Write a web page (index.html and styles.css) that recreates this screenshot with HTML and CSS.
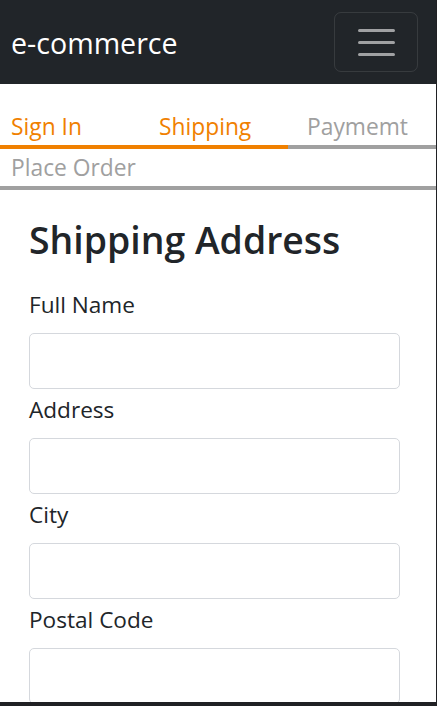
FILE: index.html
```html
<!DOCTYPE html>
<html lang="en">
<head>
<meta charset="utf-8">
<title>Shipping Address</title>
<link rel="stylesheet" href="styles.css">
</head>
<body>
<div class="page">
  <header class="navbar">
    <a class="brand" href="#">e-commerce</a>
    <button class="toggler" type="button" aria-label="Toggle navigation">
      <svg width="37" height="27" viewBox="0 0 37 27">
        <path d="M1.5 1.5h34M1.5 13.5h34M1.5 25.5h34" stroke="#a0a1a3" stroke-width="3" stroke-linecap="round" fill="none"/>
      </svg>
    </button>
  </header>
  <nav class="steps">
    <div class="step active">Sign In</div>
    <div class="step active">Shipping</div>
    <div class="step">Paymemt</div>
    <div class="step step-wide">Place Order</div>
  </nav>
  <main class="container">
    <h1 class="title">Shipping Address</h1>
    <form class="form">
      <div class="field">
        <label class="label" for="fullName">Full Name</label>
        <input class="input" id="fullName" type="text">
      </div>
      <div class="field">
        <label class="label" for="address">Address</label>
        <input class="input" id="address" type="text">
      </div>
      <div class="field">
        <label class="label" for="city">City</label>
        <input class="input" id="city" type="text">
      </div>
      <div class="field">
        <label class="label" for="postal">Postal Code</label>
        <input class="input" id="postal" type="text">
      </div>
    </form>
  </main>
</div>
</body>
</html>
```
FILE: styles.css
```css
html {
  margin: 0;
  background: #202124;
  height: 100%;
  overflow: hidden;
}
body {
  margin: 0;
  font-family: "Open Sans", "Noto Sans", "Liberation Sans", sans-serif;
  color: #212529;
}
.page {
  width: 436px;
  height: 702px;
  background: #fff;
  overflow: hidden;
}
.navbar {
  width: 437px;
  height: 84px;
  box-sizing: border-box;
  background: #212529;
  display: flex;
  align-items: center;
  justify-content: space-between;
  padding: 0 19px 0 11px;
}
.brand {
  color: #fff;
  text-decoration: none;
  font-size: 28.6px;
  line-height: 1;
  padding-top: 2px;
}
.toggler {
  width: 84px;
  height: 60px;
  box-sizing: border-box;
  background: transparent;
  border: 1px solid rgba(255, 255, 255, 0.1);
  border-radius: 7px;
  display: flex;
  align-items: center;
  justify-content: center;
  padding: 0;
  margin-top: 0;
}
.toggler svg {
  display: block;
}
.steps {
  display: grid;
  grid-template-columns: repeat(3, 148px);
  margin: 24px 0 0 -8px;
  width: 444px;
}
.step {
  padding: 1px 0 0 19px;
  font-size: 22.8px;
  line-height: 36px;
  color: #a0a0a0;
  border-bottom: 4px solid #a0a0a0;
  white-space: nowrap;
}
.step.active {
  color: #f08000;
  border-bottom-color: #f08000;
}
.step-wide {
  grid-column: 1 / -1;
}
.container {
  padding: 28px 0 0 29px;
  width: 371px;
}
.title {
  margin: 0 0 25px;
  font-size: 37.4px;
  font-weight: 600;
  line-height: 1.2;
}
.form {
  display: flex;
  flex-direction: column;
  gap: 4px;
}
.field {
  display: flex;
  flex-direction: column;
}
.label {
  font-size: 22.6px;
  line-height: 33px;
  margin-bottom: 12px;
}
.input {
  display: block;
  width: 371px;
  height: 56px;
  box-sizing: border-box;
  border: 1px solid #d5d8dd;
  border-radius: 5px;
  font: inherit;
  margin: 0;
  padding: 0 17px;
  background: #fff;
}
```
